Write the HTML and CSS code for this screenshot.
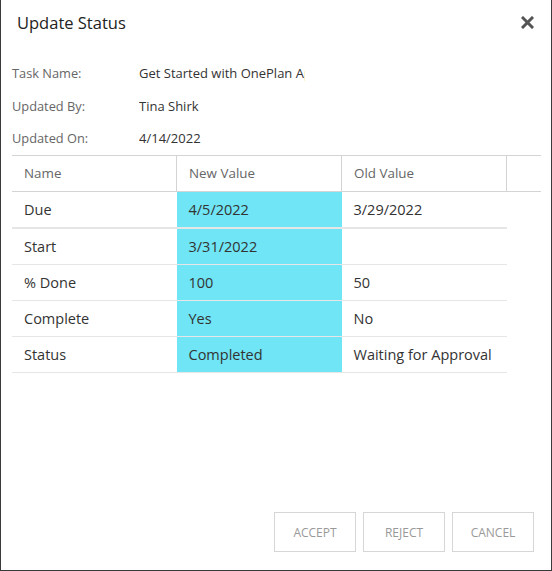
FILE: index.html
```html
<!DOCTYPE html>
<html>
<head>
<meta charset="utf-8">
<link rel="stylesheet" href="styles.css">
</head>
<body>
<div class="dialog">
  <div class="header">
    <h1 class="title">Update Status</h1>
    <button class="close" aria-label="Close">
      <svg width="13" height="13" viewBox="0 0 13 13"><path d="M2 2 L11 11 M11 2 L2 11" stroke="#555" stroke-width="3" stroke-linecap="square"/></svg>
    </button>
  </div>
  <div class="info">
    <div class="label">Task Name:</div><div class="value">Get Started with OnePlan Approvals</div>
    <div class="label">Updated By:</div><div class="value">Tina Shirk</div>
    <div class="label">Updated On:</div><div class="value">4/14/2022</div>
  </div>
  <table class="grid">
    <thead>
      <tr><th>Name</th><th>New Value</th><th>Old Value</th><th class="spare"></th></tr>
    </thead>
    <tbody>
      <tr class="first"><td>Due</td><td class="new">4/5/2022</td><td>3/29/2022</td><td class="spare"></td></tr>
      <tr><td>Start</td><td class="new">3/31/2022</td><td></td><td class="spare"></td></tr>
      <tr><td>% Done</td><td class="new">100</td><td>50</td><td class="spare"></td></tr>
      <tr><td>Complete</td><td class="new">Yes</td><td>No</td><td class="spare"></td></tr>
      <tr><td>Status</td><td class="new">Completed</td><td>Waiting for Approval</td><td class="spare"></td></tr>
    </tbody>
  </table>
  <div class="spacer"></div>
  <div class="actions">
    <button class="btn">ACCEPT</button>
    <button class="btn">REJECT</button>
    <button class="btn">CANCEL</button>
  </div>
</div>
</body>
</html>
```
FILE: styles.css
```css
html, body {
  margin: 0;
  padding: 0;
  background: #fff;
}
body {
  font-family: "Open Sans", "Noto Sans", sans-serif;
  color: #333;
}
.dialog {
  box-sizing: border-box;
  width: 552px;
  height: 571px;
  border-left: 1px solid #3a3a3a;
  border-right: 1px solid #3a3a3a;
  border-bottom: 1px solid #3a3a3a;
  display: flex;
  flex-direction: column;
}
.header {
  height: 44px;
  display: flex;
  align-items: center;
  justify-content: space-between;
  padding: 0 17px 0 16px;
}
.title {
  margin: 0;
  font-size: 16.5px;
  font-weight: 400;
  color: #222;
}
.close {
  border: 0;
  background: none;
  padding: 0;
  display: flex;
  cursor: pointer;
}
.info {
  margin-top: 13px;
  padding-left: 11px;
  display: grid;
  grid-template-columns: 127px 1fr;
  grid-auto-rows: 32.5px;
  align-items: center;
}
.label {
  font-size: 12.8px;
  color: #666;
}
.value {
  font-size: 13px;
  color: #333;
  white-space: nowrap;
  overflow: hidden;
  width: 166px;
}
.grid {
  margin: 0 0 0 11px;
  width: 528px;
  border-collapse: collapse;
  table-layout: fixed;
}
.grid th {
  height: 35px;
  padding: 0 12px;
  text-align: left;
  font-weight: 400;
  font-size: 13.4px;
  color: #666;
  border-top: 1px solid #d4d4d4;
  border-bottom: 1px solid #d4d4d4;
  border-right: 1px solid #d4d4d4;
  width: 140px;
}
.grid th.spare {
  border-right: 0;
  width: 10px;
}
.grid td {
  height: 35px;
  padding: 0 12px;
  font-size: 14.5px;
  color: #333;
  border-bottom: 1px solid #e6e6e6;
  white-space: nowrap;
}
.grid tr.first td {
  border-bottom: 2px solid #e6e6e6;
}
.grid td.spare,
.grid tr.first td.spare {
  border-bottom: 0;
}
.grid td.new {
  background: #6fe5f5;
}
.spacer {
  flex: 1;
}
.actions {
  display: flex;
  justify-content: flex-end;
  gap: 7px;
  padding: 0 17px 18px 0;
}
.btn {
  width: 82px;
  height: 40px;
  border: 1px solid #d6d6d6;
  background: #fff;
  color: #999;
  font-family: "Open Sans", "Noto Sans", sans-serif;
  font-size: 12px;
  padding: 0;
}
```
